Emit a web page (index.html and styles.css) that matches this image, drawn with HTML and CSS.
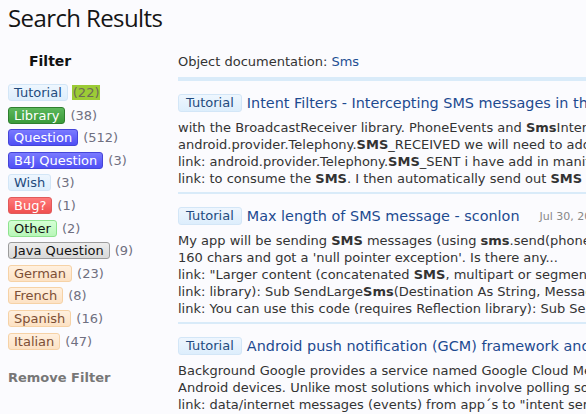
FILE: index.html
```html
<!DOCTYPE html>
<html>
<head>
<meta charset="utf-8">
<link rel="stylesheet" href="styles.css">
</head>
<body>
<h1 class="page-title">Search Results</h1>
<div class="layout">
  <aside class="sidebar">
    <h3 class="filter-head">Filter</h3>
    <ul class="tag-list">
      <li><span class="tag tag-blue">Tutorial</span> <span class="count count-hl">(22)</span></li>
      <li><span class="tag tag-green">Library</span> <span class="count">(38)</span></li>
      <li><span class="tag tag-violet">Question</span> <span class="count">(512)</span></li>
      <li><span class="tag tag-violet">B4J Question</span> <span class="count">(3)</span></li>
      <li><span class="tag tag-blue">Wish</span> <span class="count">(3)</span></li>
      <li><span class="tag tag-red">Bug?</span> <span class="count">(1)</span></li>
      <li><span class="tag tag-lime">Other</span> <span class="count">(2)</span></li>
      <li><span class="tag tag-grey">Java Question</span> <span class="count">(9)</span></li>
      <li><span class="tag tag-orange">German</span> <span class="count">(23)</span></li>
      <li><span class="tag tag-orange">French</span> <span class="count">(8)</span></li>
      <li><span class="tag tag-orange">Spanish</span> <span class="count">(16)</span></li>
      <li><span class="tag tag-orange">Italian</span> <span class="count">(47)</span></li>
    </ul>
    <div class="remove-filter">Remove Filter</div>
  </aside>
  <main class="results">
    <div class="doc-line">Object documentation: <span class="doc-link">Sms</span></div>
    <div class="result">
      <div class="result-title"><span class="tag tag-blue">Tutorial</span> <span class="title-link">Intent Filters - Intercepting SMS messages in the background</span></div>
      <div class="snippet">
        <div class="line">with the BroadcastReceiver library. PhoneEvents and <b>Sms</b>Interceptor objects are used to intercept messages</div>
        <div class="line">android.provider.Telephony.<b>SMS</b>_RECEIVED we will need to add the following to the manifest</div>
        <div class="line">link: android.provider.Telephony.<b>SMS</b>_SENT i have add in manifest but it does not work</div>
        <div class="line">link: to consume the <b>SMS</b>. I then automatically send out <b>SMS</b> replies to the sender</div>
      </div>
    </div>
    <div class="result">
      <div class="result-title"><span class="tag tag-blue">Tutorial</span> <span class="title-link">Max length of SMS message - sconlon</span> <span class="date">Jul 30, 2012</span></div>
      <div class="snippet">
        <div class="line">My app will be sending <b>SMS</b> messages (using <b>sms</b>.send(phone, message)). I tried sending more than</div>
        <div class="line">160 chars and got a 'null pointer exception'. Is there any...</div>
        <div class="line">link: "Larger content (concatenated <b>SMS</b>, multipart or segmented <b>SMS</b>) is possible</div>
        <div class="line">link: library): Sub SendLarge<b>Sms</b>(Destination As String, Message As String)</div>
        <div class="line">link: You can use this code (requires Reflection library): Sub SendLarge<b>Sms</b></div>
      </div>
    </div>
    <div class="result">
      <div class="result-title"><span class="tag tag-blue">Tutorial</span> <span class="title-link">Android push notification (GCM) framework and tutorial</span></div>
      <div class="snippet">
        <div class="line">Background Google provides a service named Google Cloud Messaging (GCM) that allows</div>
        <div class="line">Android devices. Unlike most solutions which involve polling some server for new messages</div>
        <div class="line">link: data/internet messages (events) from app´s to "intent service" like <b>SMS</b></div>
      </div>
    </div>
  </main>
</div>
</body>
</html>
```
FILE: styles.css
```css
html, body {
  margin: 0;
  padding: 0;
}
body {
  background: #fbfbfe;
  font-family: "DejaVu Sans", Verdana, sans-serif;
  font-size: 13px;
  color: #333;
  overflow: hidden;
  width: 586px;
  height: 414px;
}
.page-title {
  margin: 0;
  padding: 2px 0 0 8px;
  font-family: "Open Sans", "Noto Sans", sans-serif;
  font-weight: normal;
  font-size: 24px;
  line-height: 32px;
  color: #151515;
  letter-spacing: -0.6px;
}
.layout {
  display: flex;
  padding-left: 8px;
  margin-top: 17px;
}
.sidebar {
  width: 170px;
  flex: none;
}
.filter-head {
  margin: 0 0 13px 21px;
  font-size: 14px;
  font-weight: bold;
  line-height: 20px;
  color: #111;
}
.tag-list {
  list-style: none;
  margin: 0;
  padding: 0;
}
.tag-list li {
  display: flex;
  align-items: center;
  height: 17px;
  margin-bottom: 5.6px;
  white-space: nowrap;
}
.tag {
  display: inline-block;
  box-sizing: border-box;
  height: 17px;
  line-height: 15px;
  padding: 0 5px;
  border: 1px solid;
  border-radius: 3px;
  font-size: 13px;
}
.tag-blue {
  background: linear-gradient(#eef6fe, #ddeefc);
  border-color: #d3e6f7;
  color: #234b7e;
}
.tag-green {
  background: linear-gradient(#5cb85c, #3a9a3a);
  border-color: #2f7f2f;
  color: #fff;
}
.tag-violet {
  background: linear-gradient(#7a7aff, #4f4ff5);
  border-color: #4545d8;
  color: #fff;
}
.tag-red {
  background: linear-gradient(#ff7a7a, #f05050);
  border-color: #e05a5a;
  color: #fff;
}
.tag-lime {
  background: linear-gradient(#d4ffd4, #b8f7b8);
  border-color: #8ee28e;
  color: #111;
}
.tag-grey {
  background: linear-gradient(#ededed, #d9d9d9);
  border-color: #9c9c9c;
  color: #111;
}
.tag-orange {
  background: linear-gradient(#fff0df, #fde2c4);
  border-color: #f6d2a6;
  color: #7d4f35;
}
.count {
  margin-left: 5px;
  color: #6f6f80;
  font-size: 13px;
}
.count-hl {
  background: #9ccb36;
  padding: 0 1px;
  line-height: 15px;
  margin-left: 4px;
  color: #6d6a58;
}
.remove-filter {
  margin-top: 20px;
  font-weight: bold;
  color: #777;
  font-size: 13px;
}
.results {
  flex: 1;
  min-width: 0;
  overflow: hidden;
}
.doc-line {
  line-height: 17px;
  padding-top: 2px;
  padding-bottom: 7px;
  border-bottom: 4px solid #d9ebf9;
  color: #333;
  white-space: nowrap;
}
.doc-link {
  color: #1f4f93;
}
.result {
  padding: 13px 0 5px;
  border-bottom: 2px solid #d9ebf9;
}
.result:last-child {
  border-bottom: none;
}
.result-title {
  display: flex;
  align-items: center;
  white-space: nowrap;
  height: 18px;
  margin-bottom: 7px;
}
.result-title .tag {
  height: 18px;
  line-height: 16px;
  padding: 0 7px;
}
.title-link {
  margin-left: 5px;
  font-size: 14.4px;
  color: #1d4a90;
}
.date {
  margin-left: 20px;
  font-size: 11px;
  color: #888;
}
.line {
  white-space: nowrap;
  line-height: 17px;
  color: #333;
}
.line b {
  color: #333;
}
```
